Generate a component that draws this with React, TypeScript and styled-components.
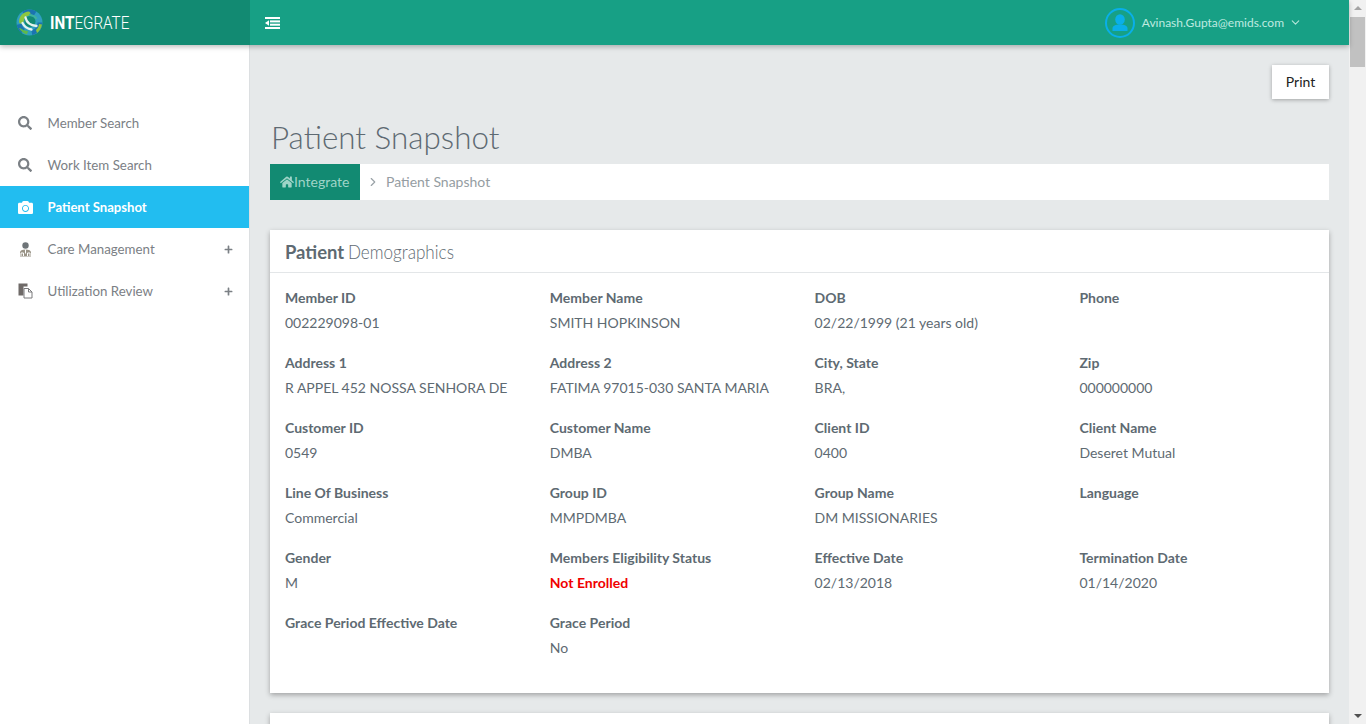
import styled, { createGlobalStyle } from 'styled-components';
import { FaSearch, FaCamera, FaPlus, FaHome } from 'react-icons/fa';
import { FiChevronDown, FiChevronRight } from 'react-icons/fi';

const GlobalStyle = createGlobalStyle`
    html, body {
        margin: 0;
        height: 100%;
        overflow: hidden;
    }
    body {
        font-family: "Lato", "Liberation Sans", sans-serif;
        font-size: 14px;
        color: #5e6a72;
        background: #e6e9ea;
    }
    * {
        box-sizing: border-box;
    }
`;

const fields: { label: string; value?: string; alert?: boolean }[] = [
    { label: 'Member ID', value: '002229098-01' },
    { label: 'Member Name', value: 'SMITH HOPKINSON' },
    { label: 'DOB', value: '02/22/1999 (21 years old)' },
    { label: 'Phone' },
    { label: 'Address 1', value: 'R APPEL 452 NOSSA SENHORA DE' },
    { label: 'Address 2', value: 'FATIMA 97015-030 SANTA MARIA' },
    { label: 'City, State', value: 'BRA,' },
    { label: 'Zip', value: '000000000' },
    { label: 'Customer ID', value: '0549' },
    { label: 'Customer Name', value: 'DMBA' },
    { label: 'Client ID', value: '0400' },
    { label: 'Client Name', value: 'Deseret Mutual' },
    { label: 'Line Of Business', value: 'Commercial' },
    { label: 'Group ID', value: 'MMPDMBA' },
    { label: 'Group Name', value: 'DM MISSIONARIES' },
    { label: 'Language' },
    { label: 'Gender', value: 'M' },
    { label: 'Members Eligibility Status', value: 'Not Enrolled', alert: true },
    { label: 'Effective Date', value: '02/13/2018' },
    { label: 'Termination Date', value: '01/14/2020' },
    { label: 'Grace Period Effective Date' },
    { label: 'Grace Period', value: 'No' },
];

function Logo() {
    return (
        <svg width="27" height="27" viewBox="0 0 27 27">
            <circle cx="13.500" cy="13.500" r="13" fill="#2f9fc0" />
            <circle cx="13.500" cy="13.500" r="10.500" fill="none" stroke="#1b74b0" strokeWidth="5" strokeDasharray="14 9 8 12 12 11" />
            <path d="M3 13C3 7 7 3 13 2.500c2 1 2 3 0 4-3 .5-5 2.500-5.500 6.500-1 2-4 2-4.500 0z" fill="#8cc63f" />
            <path d="M4 19c3 2 5 3 8 3l-1 3.500A13 13 0 0 1 3 19z" fill="#5fb94a" />
            <path d="M20 21c2-2 3-4 3-6l3 .5A13 13 0 0 1 21 24z" fill="#8cc63f" />
            <circle cx="14" cy="12.500" r="5.500" fill="#128a72" />
            <path d="M9.500 8.500c1 5 5 8 11 8.500M6.500 14c2 4 5 6 9 6.500" fill="none" stroke="#e4f3ee" strokeWidth="2.300" strokeLinecap="round" />
            <path d="M13 6c3 0 6 1 7.500 4" fill="none" stroke="#3fb39a" strokeWidth="2" />
        </svg>
    );
}

function ToggleIcon() {
    return (
        <svg width="15" height="12" viewBox="0 0 15 12" fill="#fff">
            <rect x="0" y="0" width="15" height="2" />
            <rect x="5" y="3.400" width="10" height="2" />
            <rect x="5" y="6.700" width="10" height="2" />
            <rect x="0" y="10" width="15" height="2" />
            <path d="M4 3.200v5.600L0 6z" />
        </svg>
    );
}

function AvatarIcon() {
    return (
        <svg width="30" height="30" viewBox="0 0 30 30">
            <circle cx="15" cy="15" r="14" fill="none" stroke="#0aafe8" strokeWidth="2" />
            <ellipse cx="15" cy="11.500" rx="4.800" ry="5.300" fill="#0aafe8" />
            <path d="M7.500 23v-2.500c0-2.800 3-4 7.500-4s7.500 1.200 7.500 4V23z" fill="#0aafe8" />
        </svg>
    );
}

function DoctorIcon() {
    return (
        <svg width="15" height="15" viewBox="0 0 15 15">
            <circle cx="7.500" cy="3.500" r="3.200" fill="#6e7478" />
            <path d="M2 14.500v-4c0-2 2-3 5.500-3s5.500 1 5.500 3v4z" fill="#9a9487" />
            <path d="M3 14v-3h2.500v3M9.500 14v-3H12v3M7.500 7.500v4" fill="none" stroke="#fff" strokeWidth="1" />
        </svg>
    );
}

function FilesIcon() {
    return (
        <svg width="15" height="16" viewBox="0 0 15 16">
            <path d="M0.500 0.500h9v3h-4v9h-5z" fill="#6f6a68" />
            <path d="M6 5.500h4.500l3.500 3.500v6H6z" fill="#fff" stroke="#7a7a7c" strokeWidth="1" />
            <path d="M10.500 5.500v3.500H14" fill="none" stroke="#7a7a7c" strokeWidth="1" />
        </svg>
    );
}

function App() {
    return (
        <Page>
            <GlobalStyle />
            <Viewport>
                <TopBar>
                    <Brand>
                        <Logo />
                        <BrandText>
                            <b>INT</b>EGRATE
                        </BrandText>
                    </Brand>
                    <Toggle>
                        <ToggleIcon />
                    </Toggle>
                    <UserMenu>
                        <AvatarIcon />
                        <UserName>Avinash.Gupta@emids.com</UserName>
                        <FiChevronDown size={13} color="#b5e6da" />
                    </UserMenu>
                </TopBar>
                <Body>
                    <Sidebar>
                        <NavItem>
                            <NavIcon><FaSearch size={14} /></NavIcon>
                            Member Search
                        </NavItem>
                        <NavItem>
                            <NavIcon><FaSearch size={14} /></NavIcon>
                            Work Item Search
                        </NavItem>
                        <NavItem $active>
                            <NavIcon><FaCamera size={15} /></NavIcon>
                            Patient Snapshot
                        </NavItem>
                        <NavItem>
                            <NavIcon><DoctorIcon /></NavIcon>
                            Care Management
                            <Plus><FaPlus size={9} /></Plus>
                        </NavItem>
                        <NavItem>
                            <NavIcon><FilesIcon /></NavIcon>
                            Utilization Review
                            <Plus><FaPlus size={9} /></Plus>
                        </NavItem>
                    </Sidebar>
                    <Content>
                        <PrintRow>
                            <PrintBtn>Print</PrintBtn>
                        </PrintRow>
                        <PageTitle>Patient Snapshot</PageTitle>
                        <Breadcrumb>
                            <HomeCrumb><FaHome size={14} />Integrate</HomeCrumb>
                            <CrumbSep><FiChevronRight size={14} /></CrumbSep>
                            <CrumbText>Patient Snapshot</CrumbText>
                        </Breadcrumb>
                        <Card>
                            <CardHead>
                                <HeadBold>Patient</HeadBold>
                                <HeadLight>Demographics</HeadLight>
                            </CardHead>
                            <FieldGrid>
                                {fields.map((f) => (
                                    <Field key={f.label}>
                                        <FieldLabel>{f.label}</FieldLabel>
                                        <FieldValue $alert={f.alert}>{f.value}</FieldValue>
                                    </Field>
                                ))}
                            </FieldGrid>
                        </Card>
                        <NextCard />
                    </Content>
                </Body>
            </Viewport>
            <ScrollTrack>
                <ArrowUp />
                <ScrollThumb />
                <ArrowDown />
            </ScrollTrack>
        </Page>
    );
}

export default App;

const Page = styled.div`
    display: flex;
    height: 724px;
    overflow: hidden;
`;

const Viewport = styled.div`
    flex: 1;
    min-width: 0;
    display: flex;
    flex-direction: column;
`;

const TopBar = styled.header`
    height: 45px;
    flex: none;
    display: flex;
    align-items: center;
    background: #17a085;
    box-shadow: 0 2px 5px rgba(0, 0, 0, 0.26);
    position: relative;
    z-index: 2;
`;

const Brand = styled.div`
    width: 250px;
    height: 100%;
    display: flex;
    align-items: center;
    gap: 7px;
    padding-left: 16px;
    background: #128a72;
`;

const BrandText = styled.span`
    display: inline-block;
    font-family: "Roboto", sans-serif;
    font-weight: 300;
    font-size: 19px;
    color: #fff;
    transform: scaleX(0.8);
    transform-origin: left center;

    b {
        font-weight: 700;
    }
`;

const Toggle = styled.div`
    display: flex;
    margin-left: 15px;
`;

const UserMenu = styled.div`
    margin-left: auto;
    margin-right: 47px;
    display: flex;
    align-items: center;
`;

const UserName = styled.span`
    margin: 0 5px 0 7px;
    font-size: 12px;
    color: #bfeae0;
`;

const Body = styled.div`
    flex: 1;
    min-height: 0;
    display: flex;
`;

const Sidebar = styled.nav`
    width: 250px;
    flex: none;
    padding-top: 57px;
    background: #fff;
    border-right: 1px solid #dcdfe1;
`;

const NavItem = styled.div<{ $active?: boolean }>`
    height: 42px;
    display: flex;
    align-items: center;
    padding-left: 18px;
    padding-right: 16px;
    font-size: ${(p) => (p.$active ? '13.1px' : '13.3px')};
    font-weight: ${(p) => (p.$active ? 700 : 400)};
    color: ${(p) => (p.$active ? '#fff' : '#7b8085')};
    background: ${(p) => (p.$active ? '#22bdf0' : 'transparent')};
`;

const NavIcon = styled.span`
    width: 29.5px;
    display: flex;
    align-items: center;
`;

const Plus = styled.span`
    margin-left: auto;
    display: flex;
`;

const Content = styled.main`
    flex: 1;
    min-width: 0;
    padding: 20px 20px 0;
    overflow: hidden;
`;

const PrintRow = styled.div`
    display: flex;
    justify-content: flex-end;
`;

const PrintBtn = styled.button`
    width: 57px;
    height: 34px;
    border: 0;
    padding: 0 0 2px;
    background: #fff;
    font: 400 14px "Lato", sans-serif;
    color: #222;
    box-shadow: 0 1px 4px rgba(0, 0, 0, 0.3);
    cursor: pointer;
`;

const PageTitle = styled.h1`
    margin: 17px 0 0 1px;
    font-size: 31.4px;
    line-height: 43px;
    font-weight: 300;
    color: #5e6a72;
`;

const Breadcrumb = styled.div`
    margin-top: 5px;
    height: 36px;
    display: flex;
    align-items: center;
    padding-bottom: 1px;
    background: #fff;
`;

const HomeCrumb = styled.span`
    width: 90px;
    height: 36px;
    margin-bottom: -1px;
    display: flex;
    align-items: center;
    padding: 0 0 1px 10px;
    background: #128a72;
    color: #9fd4c7;
`;

const CrumbSep = styled.span`
    display: flex;
    margin: 0 6px 0 6px;
    color: #9aa2a7;
`;

const CrumbText = styled.span`
    color: #959da2;
`;

const Card = styled.section`
    margin-top: 30px;
    height: 463px;
    background: #fff;
    box-shadow: 0 2px 5px rgba(0, 0, 0, 0.3);
`;

const CardHead = styled.div`
    height: 43px;
    display: flex;
    align-items: center;
    padding-left: 15px;
    border-bottom: 1px solid #e3e6e8;
    font-size: 19px;
    color: #5e6a72;
`;

const HeadBold = styled.span`
    width: 63px;
    font-weight: 700;
    display: inline-block;
    transform: scaleX(0.97);
    transform-origin: left center;
`;

const HeadLight = styled.span`
    font-weight: 300;
    display: inline-block;
    transform: scaleX(0.9);
    transform-origin: left center;
`;

const FieldGrid = styled.div`
    display: grid;
    grid-template-columns: repeat(4, 264.8px);
    grid-auto-rows: 65px;
    padding: 15px 0 0 15px;
`;

const Field = styled.div`
    display: flex;
    flex-direction: column;
    gap: 5px;
`;

const FieldLabel = styled.span`
    line-height: 20px;
    font-weight: 700;
    color: #5e6a72;
`;

const FieldValue = styled.span<{ $alert?: boolean }>`
    line-height: 20px;
    font-weight: ${(p) => (p.$alert ? 700 : 400)};
    color: ${(p) => (p.$alert ? '#f00000' : '#5e6a72')};
`;

const NextCard = styled.section`
    margin-top: 20px;
    height: 60px;
    background: #fff;
    box-shadow: 0 2px 5px rgba(0, 0, 0, 0.3);
`;

const ScrollTrack = styled.aside`
    width: 17px;
    flex: none;
    display: flex;
    flex-direction: column;
    align-items: center;
    background: #f1f1f1;
`;

const ArrowUp = styled.span`
    margin-top: 6px;
    border: 4px solid transparent;
    border-top: 0;
    border-bottom: 4px solid #a3a3a3;
    height: 0;
`;

const ScrollThumb = styled.div`
    margin-top: 7px;
    width: 15px;
    height: 50px;
    background: #c1c1c1;
`;

const ArrowDown = styled.span`
    margin-top: auto;
    margin-bottom: 6px;
    border: 4px solid transparent;
    border-bottom: 0;
    border-top: 4px solid #505050;
    height: 0;
`;
